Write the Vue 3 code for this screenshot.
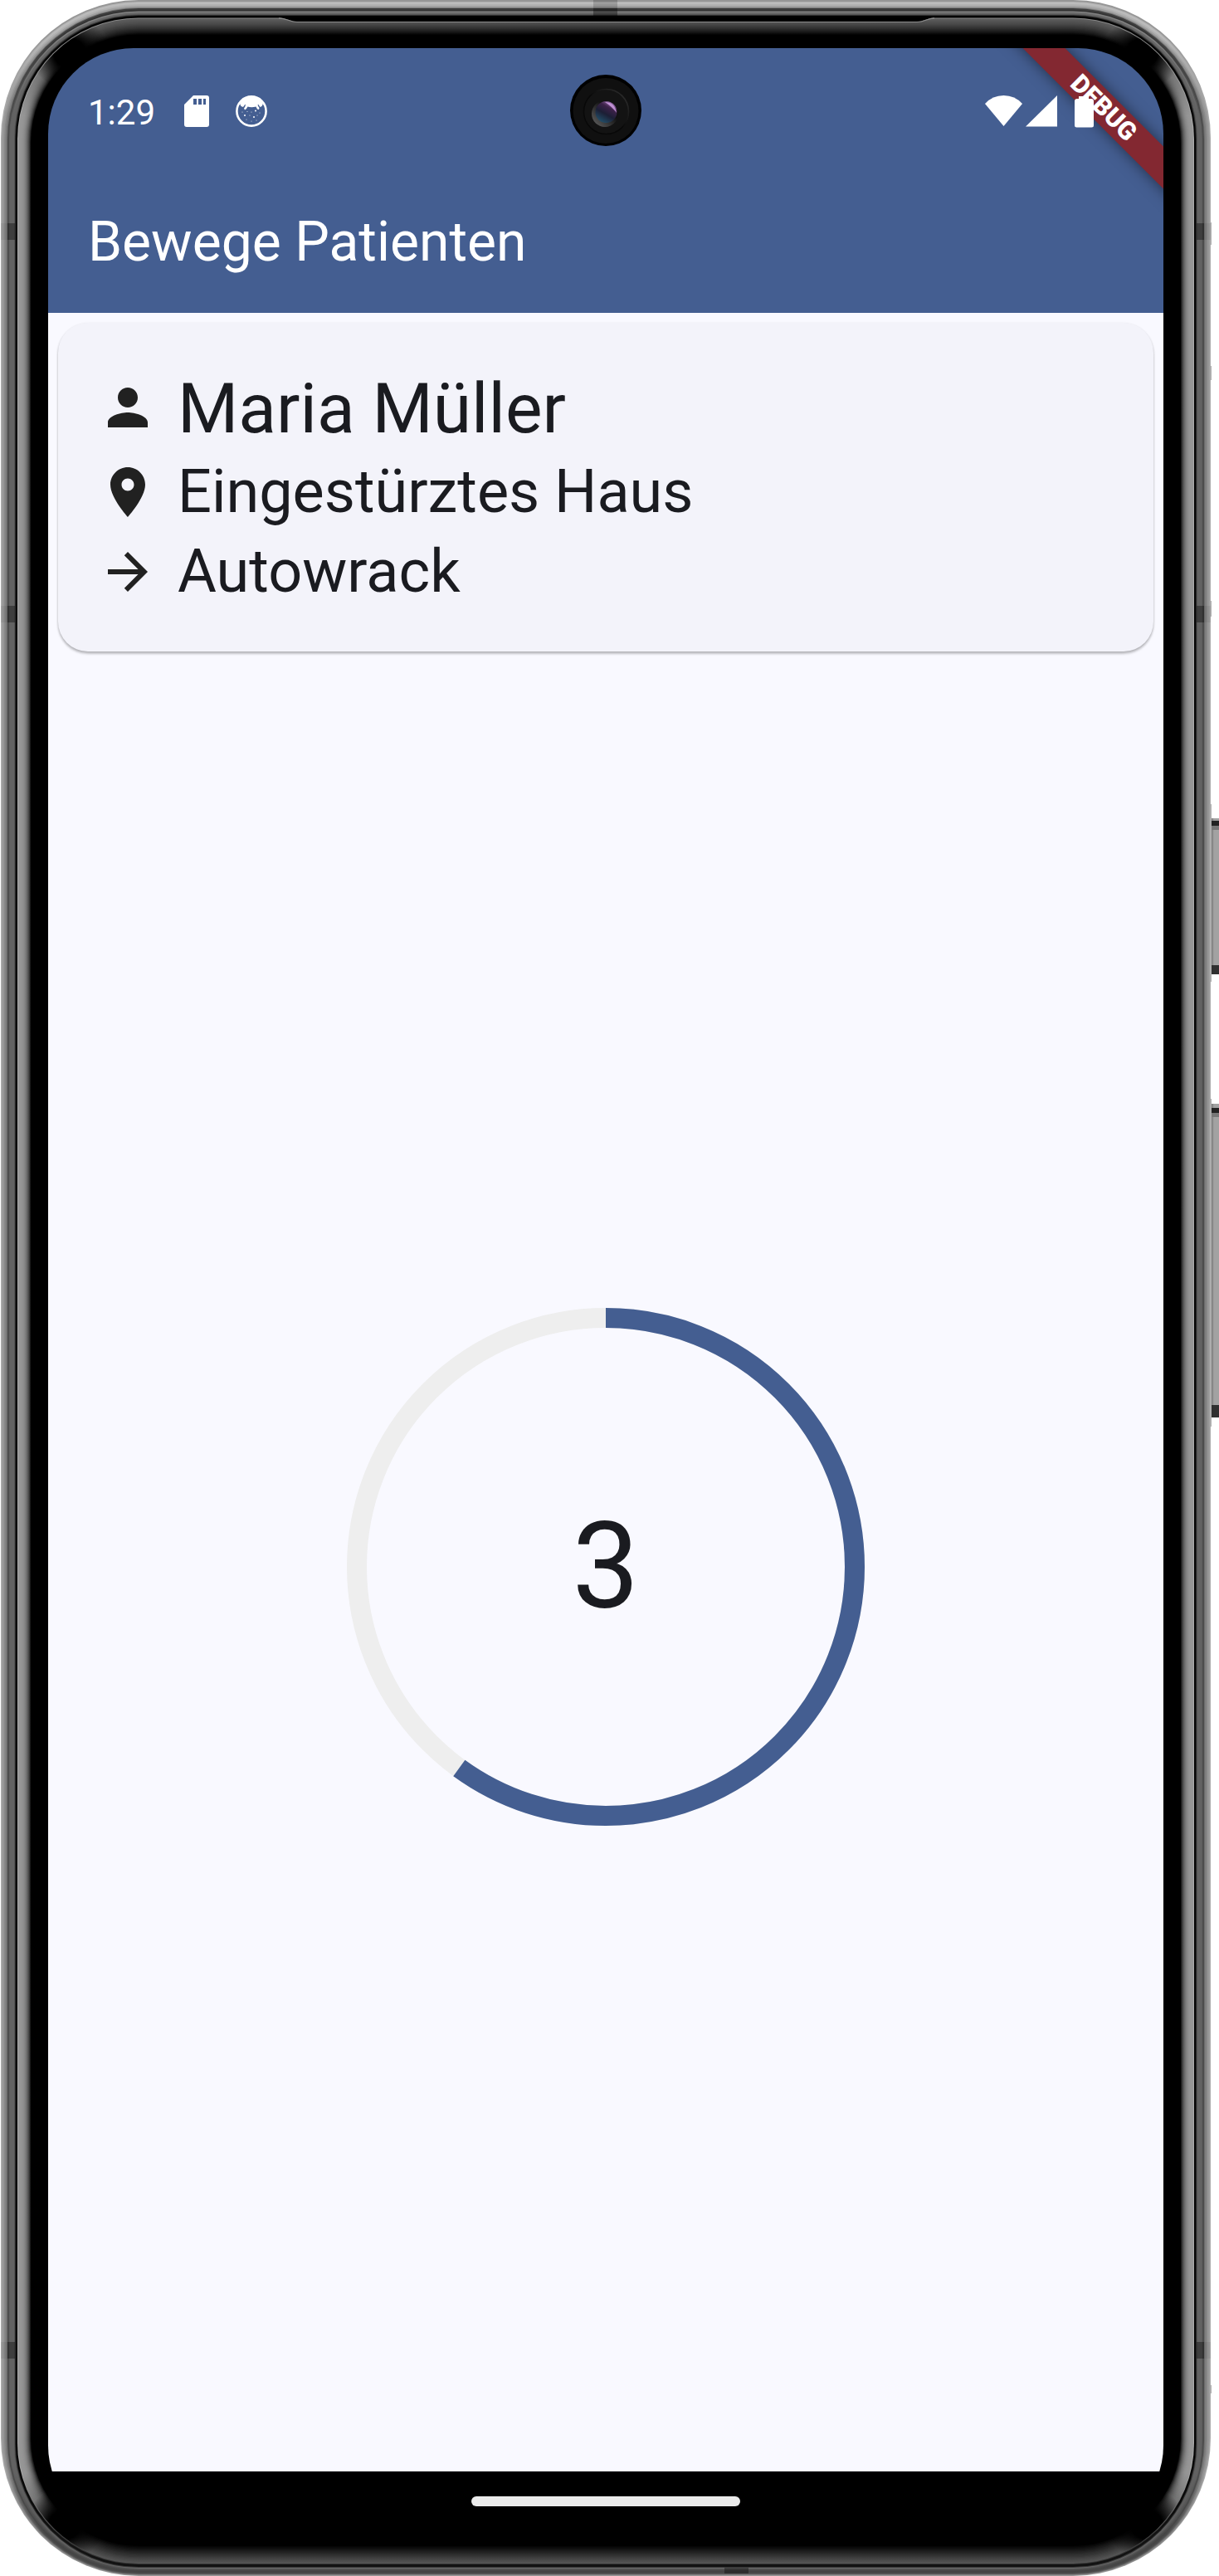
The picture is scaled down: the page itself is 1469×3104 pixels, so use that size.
<script setup>
import { ref } from 'vue'

const title = ref('Bewege Patienten')
const count = ref(3)
const total = 5
const radius = 300
const circumference = 2 * Math.PI * radius

const patient = [
  { text: 'Maria Müller', size: 'large', icon: 'M12 12c2.21 0 4-1.79 4-4s-1.79-4-4-4-4 1.79-4 4 1.79 4 4 4zm0 2c-2.67 0-8 1.34-8 4v2h16v-2c0-2.66-5.33-4-8-4z' },
  { text: 'Eingestürztes Haus', size: 'medium', icon: 'M12 2C8.13 2 5 5.13 5 9c0 5.25 7 13 7 13s7-7.75 7-13c0-3.87-3.13-7-7-7zm0 9.5c-1.38 0-2.5-1.12-2.5-2.5s1.12-2.5 2.5-2.5 2.5 1.12 2.5 2.5-1.12 2.5-2.5 2.5z' },
  { text: 'Autowrack', size: 'medium', icon: 'M12 4l-1.41 1.41L16.17 11H4v2h12.17l-5.58 5.59L12 20l8-8z' },
]

// Bezel rings from outside to inside: x, top y, inset from bottom, grey levels at top, side and bottom
const rings = [
  [1, 0, 0, 150, 172, 150],
  [2, 2, 1, 178, 160, 130],
  [3, 3, 1.5, 188, 150, 120],
  [5, 5, 2, 178, 136, 90],
  [6.5, 7, 3, 160, 124, 74],
  [8, 9, 4, 120, 108, 70],
  [9, 10, 5, 62, 76, 68],
  [11, 12, 6, 50, 94, 72],
  [12, 13.5, 7, 128, 98, 76],
  [14, 15, 8, 104, 98, 88],
  [17, 17, 9, 84, 84, 102],
  [18, 18, 10, 48, 40, 56],
  [19, 19, 11, 4, 4, 18],
  [21, 21.5, 14, 136, 170, 54],
  [22, 22.5, 15, 90, 150, 84],
]
for (let i = 1; i <= 16; i++) {
  const t = i / 16
  rings.push([
    22 + 15 * t,
    22.5 + 19 * t,
    15 + 21 * t,
    Math.round(90 * (1 - Math.pow(t, 1.4))),
    Math.round(150 * (1 - Math.pow(t, 3))),
    Math.round(84 * (1 - Math.pow(t, 1.1))),
  ])
}
const grey = (v) => `rgb(${v},${v},${v})`
const seamsY = [269, 730, 2822]
const bumps = [[268, 27], [441, 17], [724, 19], [969, 214], [1324, 395], [2874, 10]]
const buttons = [{ y: 986, h: 188, top: 3, cap: 11 }, { y: 1330, h: 378, top: 5, cap: 15 }]
const corners = [[84, 64], [1376, 64], [78, 3042], [1382, 3042]]
</script>

<template>
  <div class="phone">
    <svg class="frame" width="1469" height="3104" viewBox="0 0 1469 3104">
      <defs>
        <linearGradient v-for="(r, i) in rings" :id="'ring' + i" :key="i" gradientUnits="userSpaceOnUse" x1="0" y1="0" x2="0" y2="3104">
          <stop offset="0.012" :stop-color="grey(r[3])" />
          <stop offset="0.045" :stop-color="grey(r[4])" />
          <stop offset="0.96" :stop-color="grey(r[4])" />
          <stop offset="0.984" :stop-color="grey(r[5])" />
        </linearGradient>
        <radialGradient id="cornerShade">
          <stop offset="0.4" stop-color="#000" />
          <stop offset="1" stop-color="#000" stop-opacity="0" />
        </radialGradient>
        <linearGradient id="buttonFill" x1="0" x2="1">
          <stop offset="0" stop-color="#777" />
          <stop offset="0.25" stop-color="#a2a2a2" />
          <stop offset="0.8" stop-color="#a2a2a2" />
          <stop offset="1" stop-color="#8d8d8d" />
        </linearGradient>
        <clipPath id="glass"><rect x="22.5" y="23" width="1415" height="3065" rx="143" /></clipPath>
      </defs>
      <rect v-for="(b, i) in bumps" :key="'b' + i" x="1458" :y="b[0]" width="2" :height="b[1]" fill="#b0b0b0" />
      <g v-for="b in buttons" :key="b.y">
        <rect x="1460" :y="b.y" width="12" :height="b.h" fill="url(#buttonFill)" />
        <rect x="1460" :y="b.y + b.top" width="12" height="6" fill="#222" />
        <rect x="1460" :y="b.y + b.top + 6" width="12" height="5" fill="#777" />
        <rect x="1460" :y="b.y + b.h - b.cap" width="12" :height="b.cap" fill="#303030" />
      </g>
      <rect
        v-for="(r, i) in rings" :key="'r' + i"
        :x="r[0]" :y="r[1]" :width="1460 - 2 * r[0]" :height="3104 - r[1] - r[2]"
        :rx="167 - r[0]" :fill="`url(#ring${i})`"
      />
      <g clip-path="url(#glass)">
        <ellipse v-for="(c, i) in corners" :key="'c' + i" :cx="c[0]" :cy="c[1]" rx="48" ry="44" fill="url(#cornerShade)" />
      </g>
      <path d="M336 20.5H1126L1108 26H355Z" fill="#000" />
      <path d="M336 21.8C347 22 348 26.5 358 26.5H1105C1115 26.5 1116 22 1126 21.8" fill="none" stroke="#8c8c8c" stroke-width="1.2" />
      <g fill="#000">
        <rect x="715" width="29" height="10" opacity="0.16" />
        <rect x="715" y="10" width="29" height="9" opacity="0.36" />
        <rect x="873" y="3094" width="29" height="7" opacity="0.35" />
        <template v-for="y in seamsY" :key="y">
          <rect x="1" :y="y" width="8" height="20" opacity="0.06" />
          <rect x="9" :y="y" width="9" height="20" opacity="0.36" />
          <rect x="1442" :y="y" width="9" height="20" opacity="0.36" />
          <rect x="1451" :y="y" width="8" height="20" opacity="0.06" />
        </template>
      </g>
    </svg>

    <main class="screen">
      <header class="top">
        <div class="status">
          <span class="time">1:29</span>
          <svg class="sd" width="30" height="38" viewBox="0 0 30 38">
            <path fill="#fff" fill-rule="evenodd" d="M11 0H27Q30 0 30 3V35Q30 38 27 38H3Q0 38 0 35V11ZM11 4V11H15V4ZM17 4V11H21V4ZM23 4V11H26V4Z" />
          </svg>
          <svg class="cat" width="38" height="38" viewBox="0 0 38 38">
            <circle cx="19" cy="19" r="17.6" fill="none" stroke="#fff" stroke-width="2.6" />
            <path fill="#fff" d="M5 10Q10 1 19 1T33 10L31.500 13 29.500 14 27 10.500Q26 12 28.500 15L28 17 26 16.500 24.500 13.500Q19 15 14.500 13.500L13 16 11 17.500 10 15.500Q12.500 12 11.500 10.500L9 14 6.500 13Z" />
            <g fill="#fff">
              <circle cx="24" cy="18.5" r="1" /><circle cx="11" cy="24" r="1" /><circle cx="22" cy="26" r="1" />
              <circle cx="14" cy="19.500" r=".5" /><circle cx="19" cy="20" r=".5" /><circle cx="29" cy="21" r=".5" />
              <circle cx="17" cy="24" r=".5" /><circle cx="26" cy="24" r=".5" /><circle cx="13" cy="29" r=".5" />
              <circle cx="19" cy="31" r=".5" /><circle cx="25" cy="30" r=".5" /><circle cx="8" cy="20" r=".5" />
            </g>
          </svg>
          <svg class="signals" width="132" height="40" viewBox="0 0 132 40">
            <g fill="#fff">
              <path d="M0 11Q9 1 22.5 1T45 11L22.5 38Z" />
              <path d="M49 38.5L87 1V38.5Z" />
              <path d="M113 2H125V5H128Q131 5 131 8V37Q131 39.5 128.5 39.5H110.5Q108 39.5 108 37V8Q108 5 111 5H113Z" />
            </g>
          </svg>
        </div>
        <h1>{{ title }}</h1>
        <div class="banner">DEBUG</div>
        <svg class="camera" width="88" height="88" viewBox="0 0 88 88">
          <defs>
            <linearGradient id="lens" x1="0.85" y1="0.05" x2="0.3" y2="1">
              <stop offset="0" stop-color="#a276b8" />
              <stop offset="0.3" stop-color="#3c2148" />
              <stop offset="0.6" stop-color="#1c1f35" />
              <stop offset="1" stop-color="#22506a" />
            </linearGradient>
            <linearGradient id="lip" x1="1" y1="0" x2="0.1" y2="0.9">
              <stop offset="0.4" stop-color="#111" />
              <stop offset="1" stop-color="#5a5a5a" />
            </linearGradient>
            <linearGradient id="rim" x1="1" y1="0" x2="0" y2="1">
              <stop offset="0" stop-color="#363636" />
              <stop offset="0.5" stop-color="#080808" />
            </linearGradient>
          </defs>
          <circle cx="44" cy="44" r="43" fill="#000" />
          <circle cx="44" cy="44.5" r="39.5" fill="#101010" />
          <circle cx="44.5" cy="45.5" r="27" fill="#131313" stroke="url(#rim)" stroke-width="1.6" />
          <circle cx="43" cy="48" r="16" fill="url(#lip)" />
          <circle cx="44.5" cy="46" r="13" fill="url(#lens)" />
          <path d="M43 34Q55 34 57 47Q52 40 43 34Z" fill="#dca8f0" opacity=".75" />
        </svg>
      </header>

      <section class="body">
        <article class="card">
          <div v-for="row in patient" :key="row.text" class="row" :class="row.size">
            <svg width="72" height="72" viewBox="0 0 24 24"><path :d="row.icon" fill="#212121" /></svg>
            <span>{{ row.text }}</span>
          </div>
        </article>
        <div class="timer">
          <div class="dial">
            <svg width="624" height="624" viewBox="0 0 624 624">
              <circle cx="312" cy="312" :r="radius" fill="none" stroke="#eeeeee" stroke-width="24" />
              <circle
                cx="312" cy="312" :r="radius" fill="none" stroke="#445e91" stroke-width="24"
                transform="rotate(-90 312 312)"
                :stroke-dasharray="`${circumference * count / total} ${circumference}`"
              />
            </svg>
            <span class="count">{{ count }}</span>
          </div>
        </div>
      </section>
      <nav class="nav"><i class="handle"></i></nav>
    </main>
  </div>
</template>

<style>
html, body { margin: 0; background: #fff; }
</style>

<style scoped>
.phone {
  position: relative;
  box-sizing: border-box;
  width: 1469px;
  height: 3104px;
  padding: 58px 67px 54px 58px;
  overflow: hidden;
  font-family: Roboto, sans-serif;
}
.frame { position: absolute; top: 0; left: 0; }
.screen {
  position: relative;
  display: flex;
  flex-direction: column;
  width: 1344px;
  height: 2992px;
  border-radius: 103px;
  overflow: hidden;
  background: #000;
}
svg { display: block; flex: none; }
.top {
  position: relative;
  flex: none;
  height: 319px;
  color: #fff;
  background: #445e91;
}
.status {
  position: relative;
  z-index: 2;
  display: flex;
  align-items: center;
  height: 152px;
  padding: 0 83px 0 48px;
}
.time { width: 82px; font-size: 42px; line-height: 50px; margin-top: 3px; white-space: nowrap; }
.sd { margin-left: 34px; }
.cat { margin-left: 32px; }
.signals { margin-left: auto; }
h1 {
  margin: 40px 0 0 48px;
  font-size: 66px;
  line-height: 84px;
  font-weight: 400;
}
.banner {
  position: absolute;
  top: 54px;
  right: -128px;
  width: 400px;
  height: 36px;
  transform: rotate(45deg);
  background: #832831;
  box-shadow: 0 0 18px rgba(0, 0, 0, 0.5);
  font-size: 30.6px;
  line-height: 36px;
  font-weight: 900;
  text-align: center;
}
.camera { position: absolute; top: 31px; left: 628px; z-index: 3; }
.body {
  display: flex;
  flex-direction: column;
  flex: none;
  height: 2601px;
  background: #f9f9ff;
}
.card {
  margin: 12px;
  padding: 48px;
  border-radius: 36px;
  background: #f3f3fa;
  box-shadow: 0 3px 3px rgba(0, 0, 0, 0.2), 0 1px 3px rgba(0, 0, 0, 0.14);
  color: #1a1b20;
}
.row { display: flex; align-items: center; gap: 24px; white-space: nowrap; }
.large { height: 108px; font-size: 84px; }
.large span { margin-top: 2px; }
.medium { height: 96px; font-size: 72px; }
.medium span { margin-bottom: 2px; }
.timer { display: flex; flex: 1; align-items: center; justify-content: center; }
.dial { display: grid; place-items: center; }
.dial > * { grid-area: 1 / 1; }
.count { font-size: 144px; line-height: 168px; color: #1a1b20; }
.nav { display: flex; flex: none; height: 72px; justify-content: center; padding-top: 30px; box-sizing: border-box; }
.handle { width: 324px; height: 12px; border-radius: 6px; background: #ebebeb; }
</style>
